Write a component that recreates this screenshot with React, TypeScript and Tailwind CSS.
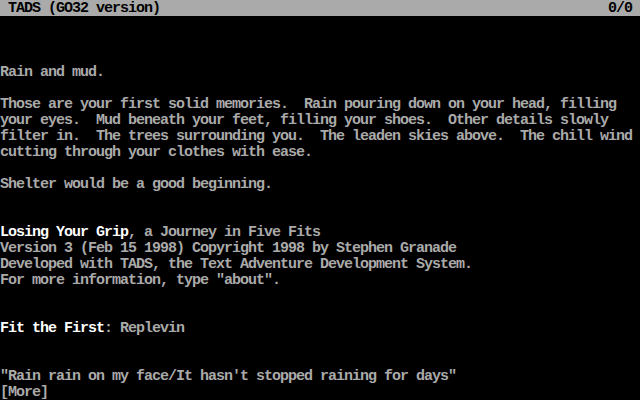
type Seg = { t: string; b?: boolean };
type Row = Seg[];

const lines: Row[] = [
  [],
  [],
  [],
  [{ t: "Rain and mud." }],
  [],
  [{ t: "Those are your first solid memories.  Rain pouring down on your head, filling" }],
  [{ t: "your eyes.  Mud beneath your feet, filling your shoes.  Other details slowly" }],
  [{ t: "filter in.  The trees surrounding you.  The leaden skies above.  The chill wind" }],
  [{ t: "cutting through your clothes with ease." }],
  [],
  [{ t: "Shelter would be a good beginning." }],
  [],
  [],
  [{ t: "Losing Your Grip", b: true }, { t: ", a Journey in Five Fits" }],
  [{ t: "Version 3 (Feb 15 1998) Copyright 1998 by Stephen Granade" }],
  [{ t: "Developed with TADS, the Text Adventure Development System." }],
  [{ t: 'For more information, type "about".' }],
  [],
  [],
  [{ t: "Fit the First", b: true }, { t: ": Replevin" }],
  [],
  [],
  [{ t: "\"Rain rain on my face/It hasn't stopped raining for days\"" }],
  [{ t: "[More]" }],
];

const Line = ({ row }: { row: Row }) => (
  <div className="h-4 whitespace-pre pt-px">
    {row.map((s, i) => (
      <span key={i} className={s.b ? "text-white" : "text-[#aaaaaa]"}>
        {s.t}
      </span>
    ))}
  </div>
);

export default function App() {
  return (
    <div
      className="h-[400px] w-[640px] overflow-hidden bg-black text-[15px] font-bold leading-4 tracking-[-1px]"
      style={{ fontFamily: '"Liberation Mono", monospace' }}
    >
      <div className="flex h-4 justify-between whitespace-pre bg-[#aaaaaa] pt-px text-black">
        <span> TADS (GO32 version)</span>
        <span>0/0 </span>
      </div>
      {lines.map((row, i) => (
        <Line key={i} row={row} />
      ))}
    </div>
  );
}
